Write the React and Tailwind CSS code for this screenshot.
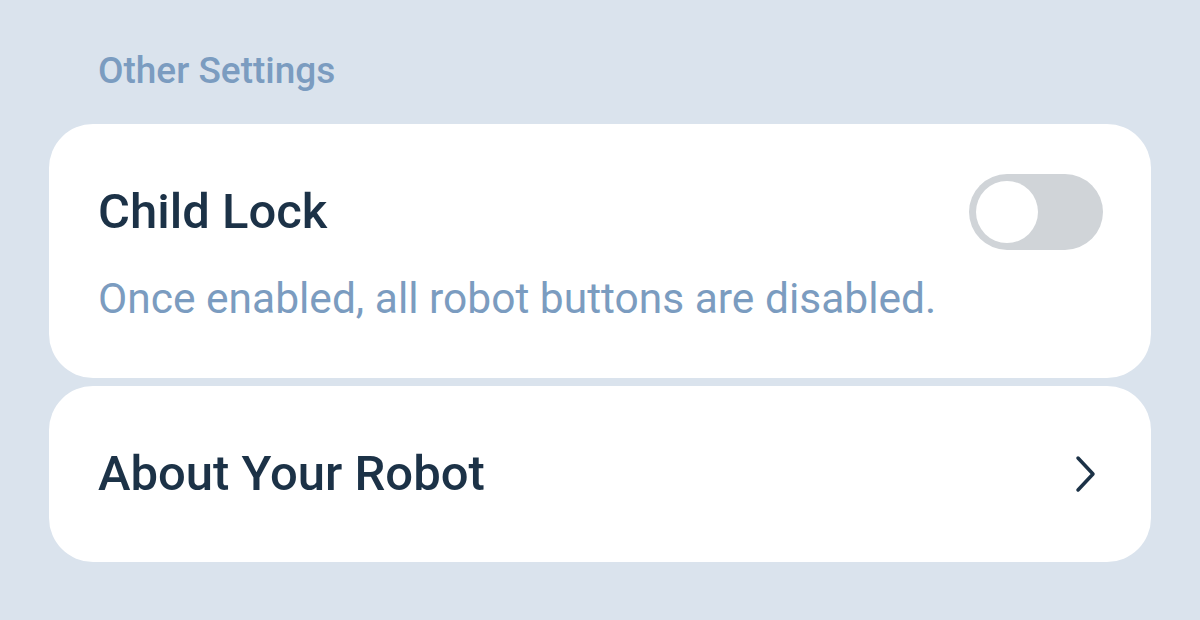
export default function App() {
  return (
    <div className="w-[1200px] h-[620px] bg-[#dae3ed] px-[49px] pt-[50px] font-['Roboto',sans-serif]">
      <div className="pl-[49px] text-[37px] font-medium leading-[42px] text-[#7b9cc0]">Other Settings</div>
      <div className="mt-[32px] flex flex-col gap-[8px]">
        <div className="h-[254px] rounded-[44px] bg-white px-[49px] pt-[50px]">
          <div className="flex items-center justify-between">
            <div className="text-[49px] font-medium leading-[76px] text-[#1c3247]">Child Lock</div>
            <div className="mr-[-1px] flex h-[76px] w-[134px] items-center rounded-full bg-[#d0d4d8] px-[7px]">
              <div className="h-[62px] w-[62px] rounded-full bg-white" />
            </div>
          </div>
          <div className="mt-[24px] text-[42.5px] leading-[50px] text-[#7b9cc0]">Once enabled, all robot buttons are disabled.</div>
        </div>
        <div className="flex h-[176px] items-center justify-between rounded-[44px] bg-white px-[49px]">
          <div className="text-[49px] font-medium text-[#1c3247]">About Your Robot</div>
          <svg width="24" height="38" viewBox="0 0 24 38" fill="none" className="mr-[4px]">
            <path d="M4 3 L19 19 L4 35" stroke="#1c3247" strokeWidth="3.5" strokeLinecap="round" strokeLinejoin="round" />
          </svg>
        </div>
      </div>
    </div>
  );
}
